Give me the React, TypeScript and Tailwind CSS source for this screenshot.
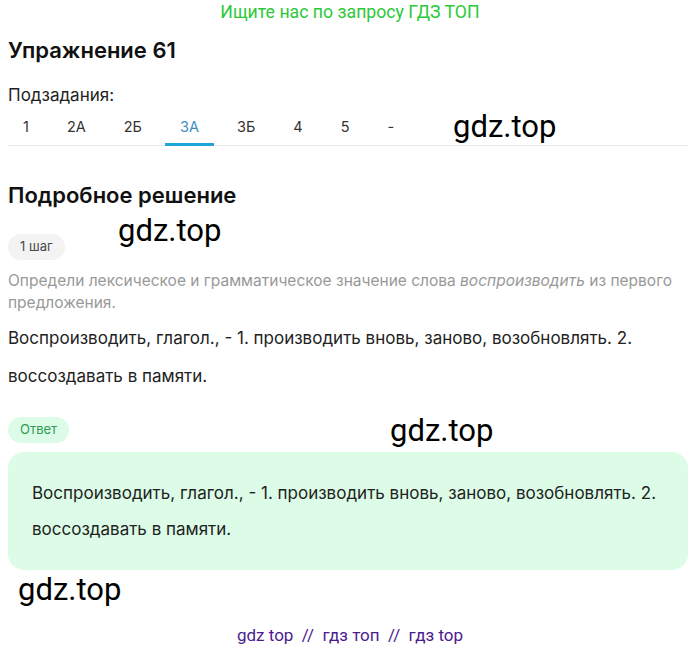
const tabs = ["1", "2А", "2Б", "3А", "3Б", "4", "5", "-"];

function Watermark({ className }: { className: string }) {
  return (
    <span
      className={`absolute text-[31px] leading-none text-black font-['Roboto',sans-serif] ${className}`}
    >
      gdz.top
    </span>
  );
}

function Badge({ children, tone }: { children: string; tone: "gray" | "green" }) {
  const cls =
    tone === "gray"
      ? "bg-[#f3f3f4] text-[#4a4a4a]"
      : "bg-[#dcfce7] text-[#2e9a52]";
  return (
    <span className={`inline-flex h-[26px] items-center self-start rounded-full px-3 text-[13px] ${cls}`}>
      {children}
    </span>
  );
}

const definition = (
  <>
    Воспроизводить, глагол., - 1. производить вновь, заново, возобновлять. 2.
    <br />
    воссоздавать в памяти.
  </>
);

export default function App() {
  return (
    <div className="relative flex h-[650px] w-[700px] flex-col bg-white font-['Inter',sans-serif] text-[#1f1f1f]">
      <div className="flex h-[24px] items-center justify-center font-['Roboto',sans-serif] text-[17.7px] text-[#2bc93a]">
        Ищите нас по запросу ГДЗ ТОП
      </div>

      <div className="flex w-[688px] flex-col pl-2 pt-3">
        <h1 className="text-[22px] font-semibold leading-[28px] text-[#111]">Упражнение 61</h1>

        <div className="mt-5 text-[17px] leading-[22px] text-[#222]">Подзадания:</div>

        <div className="mt-1 flex gap-2 border-b border-[#e6e8eb]">
          {tabs.map((t) => (
            <div
              key={t}
              className={`-mb-px flex h-[36px] items-center border-b-[3px] px-[15px] text-[14.5px] ${
                t === "3А"
                  ? "border-[#1fa5d8] text-[#3a8fc4]"
                  : "border-transparent text-[#333]"
              }`}
            >
              {t}
            </div>
          ))}
        </div>

        <h2 className="mt-[35px] text-[22px] font-semibold leading-[28px] text-[#111]">
          Подробное решение
        </h2>

        <div className="mt-[25px] flex flex-col gap-[10px]">
          <Badge tone="gray">1 шаг</Badge>
          <p className="text-[15.5px] leading-[22px] text-[#999]">
            Определи лексическое и грамматическое значение слова <i>воспроизводить</i> из первого
            предложения.
          </p>
        </div>

        <p className="mt-[5px] text-[17px] leading-[38px] text-[#222]">{definition}</p>

        <div className="mt-[22px] flex flex-col gap-[9px]">
          <Badge tone="green">Ответ</Badge>
          <div className="rounded-2xl bg-[#dcfce7] px-6 py-[23px] text-[17px] leading-[36px] text-[#222]">
            {definition}
          </div>
        </div>
      </div>

      <div className="mt-auto flex justify-center pb-[3px] font-['Roboto',sans-serif] text-[17px] leading-[24px] text-[#4b1c8f]">
        gdz top&nbsp;&nbsp;//&nbsp;&nbsp;гдз топ&nbsp;&nbsp;//&nbsp;&nbsp;гдз top
      </div>

      <Watermark className="left-[453px] top-[111px]" />
      <Watermark className="left-[118px] top-[215px]" />
      <Watermark className="left-[390px] top-[415px]" />
      <Watermark className="left-[18px] top-[574px]" />
    </div>
  );
}
